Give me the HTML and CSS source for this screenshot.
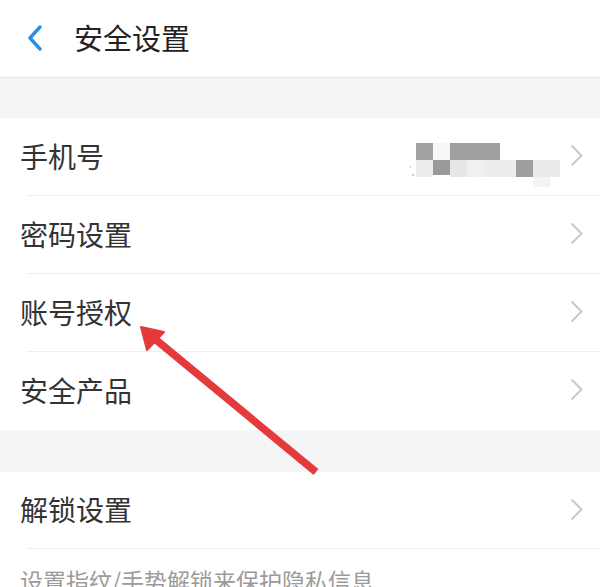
FILE: index.html
```html
<!DOCTYPE html>
<html lang="zh-CN">
<head>
<meta charset="utf-8">
<title>安全设置</title>
<link rel="stylesheet" href="styles.css">
</head>
<body>
<div class="page">
  <header class="topbar">
    <svg class="back" width="20" height="26" viewBox="0 0 20 26"><path d="M15 2 L5 13 L15 24" fill="none" stroke="#2e8fdf" stroke-width="3.4" stroke-linecap="round" stroke-linejoin="round"/></svg>
    <h1 class="title">安全设置</h1>
  </header>
  <div class="gap"></div>
  <section class="group">
    <div class="row">
      <span class="label">手机号</span>
      <span class="value">
        <svg class="mosaic" width="150" height="48" viewBox="0 0 150 48">
          <rect x="6" y="4" width="17" height="17" fill="#a3a3a3"/>
          <rect x="23" y="4" width="17" height="17" fill="#f6f6f6"/>
          <rect x="40" y="4" width="50" height="17" fill="#a0a0a0"/>
          <rect x="6" y="21" width="17" height="17" fill="#ececec"/>
          <rect x="23" y="21" width="17" height="15" fill="#9a9a9a"/>
          <rect x="40" y="21" width="17" height="17" fill="#e6e6e6"/>
          <rect x="57" y="21" width="17" height="17" fill="#f0f0f0"/>
          <rect x="74" y="21" width="32" height="17" fill="#ededed"/>
          <rect x="106" y="21" width="17" height="17" fill="#9e9e9e"/>
          <rect x="123" y="21" width="27" height="17" fill="#ebebeb"/>
          <rect x="123" y="38" width="17" height="10" fill="#f3f3f3"/>
          <circle cx="0" cy="28" r="1" fill="#bbb"/>
          <circle cx="3" cy="36" r="1" fill="#bbb"/>
        </svg>
      </span>
      <svg class="chev" width="13" height="23" viewBox="0 0 13 23"><path d="M1.5 1.5 L11.5 11.5 L1.5 21.5" fill="none" stroke="#c8c8c8" stroke-width="1.9"/></svg>
    </div>
    <div class="row">
      <span class="label">密码设置</span>
      <svg class="chev" width="13" height="23" viewBox="0 0 13 23"><path d="M1.5 1.5 L11.5 11.5 L1.5 21.5" fill="none" stroke="#c8c8c8" stroke-width="1.9"/></svg>
    </div>
    <div class="row">
      <span class="label">账号授权</span>
      <svg class="chev" width="13" height="23" viewBox="0 0 13 23"><path d="M1.5 1.5 L11.5 11.5 L1.5 21.5" fill="none" stroke="#c8c8c8" stroke-width="1.9"/></svg>
    </div>
    <div class="row last">
      <span class="label">安全产品</span>
      <svg class="chev" width="13" height="23" viewBox="0 0 13 23"><path d="M1.5 1.5 L11.5 11.5 L1.5 21.5" fill="none" stroke="#c8c8c8" stroke-width="1.9"/></svg>
    </div>
  </section>
  <div class="gap gap2"></div>
  <section class="group">
    <div class="row short">
      <span class="label">解锁设置</span>
      <svg class="chev" width="13" height="23" viewBox="0 0 13 23"><path d="M1.5 1.5 L11.5 11.5 L1.5 21.5" fill="none" stroke="#c8c8c8" stroke-width="1.9"/></svg>
    </div>
    <p class="hint">设置指纹/手势解锁来保护隐私信息</p>
  </section>
  <svg class="annot" width="600" height="587" viewBox="0 0 600 587">
    <line x1="316" y1="472" x2="155" y2="339" stroke="#e53a3c" stroke-width="7.5" stroke-linecap="butt"/>
    <polygon points="141,327 164,332 147,350" fill="#e53a3c" stroke="#e53a3c" stroke-width="2" stroke-linejoin="round"/>
  </svg>
</div>
</body>
</html>
```
FILE: styles.css
```css
html, body {
  margin: 0;
  padding: 0;
  background: #ffffff;
}
body {
  font-family: "Noto Sans CJK SC", "Noto Sans", sans-serif;
  overflow: hidden;
}
.page {
  position: relative;
  width: 600px;
  height: 587px;
  overflow: hidden;
}
.topbar {
  display: flex;
  align-items: center;
  padding: 0 0 3px 25px;
  border-bottom: 1px solid #e6e6e6;
  box-sizing: border-box;
  height: 78px;
}
.back {
  display: block;
  margin-top: 1px;
}
.title {
  margin: 0 0 0 29px;
  font-size: 29px;
  font-weight: 400;
  color: #222222;
  line-height: 1;
}
.gap {
  height: 40px;
  background: #f5f5f5;
}
.gap2 {
  height: 42px;
}
.group {
  background: #ffffff;
}
.row {
  position: relative;
  height: 78px;
  display: flex;
  align-items: center;
  padding: 0 17px 3px 20px;
  box-sizing: border-box;
}
.row::after {
  content: "";
  position: absolute;
  left: 27px;
  right: 0;
  bottom: 0;
  height: 1px;
  background: #efefef;
}
.row.last::after {
  display: none;
}
.row.short {
  height: 77px;
}
.label {
  font-size: 28px;
  color: #333333;
  line-height: 1;
  flex: 1;
}
.value {
  display: flex;
  align-items: center;
  margin-right: 10px;
  margin-top: 14px;
}
.mosaic {
  display: block;
}
.chev {
  display: block;
}
.hint {
  margin: 0;
  padding: 18px 20px 0;
  font-size: 23px;
  line-height: 1.2;
  color: #9b9b9b;
}
.annot {
  position: absolute;
  left: 0;
  top: 0;
  pointer-events: none;
}
```
